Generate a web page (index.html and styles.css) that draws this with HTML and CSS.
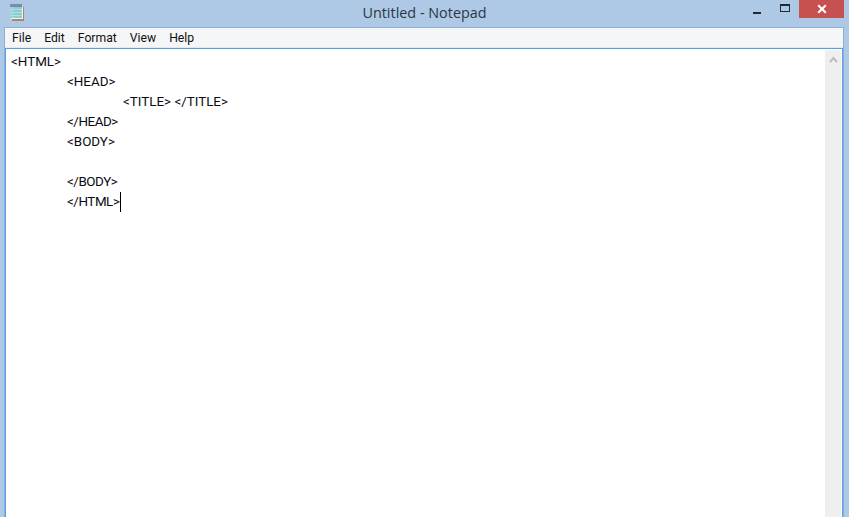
FILE: index.html
```html
<!DOCTYPE html>
<html lang="en">
<head>
<meta charset="utf-8">
<title>Untitled - Notepad</title>
<link rel="stylesheet" href="styles.css">
</head>
<body>
<div class="window">
  <header class="titlebar">
    <svg class="app-icon" width="16" height="17" viewBox="0 0 16 17">
      <path d="M13 3h2v14H3v-2h10z" fill="#a98a5c"/>
      <rect x="13" y="3" width="1" height="12" fill="#f4f4f0"/>
      <rect x="2" y="14" width="12" height="1" fill="#f4f4f0"/>
      <rect x="1" y="2" width="12" height="12" fill="#8ccbd6"/>
      <path d="M1 5.5h12M1 8.5h12M1 11.5h12" stroke="#aee0e4" stroke-width="1"/>
      <rect x="1" y="2" width="4" height="12" fill="#a6dbe0" opacity=".6"/>
      <path d="M2 0v3M4 0v3M6 0v3M8 0v3M10 0v3M12 0v3" stroke="#4a5560" stroke-width="1"/>
    </svg>
    <div class="title">Untitled - Notepad</div>
    <div class="controls">
      <div class="ctl"><span class="min"></span></div>
      <div class="ctl"><span class="max"></span></div>
      <div class="close">
        <svg width="10" height="10" viewBox="0 0 10 10"><path d="M1.2 1.2l7.6 7.6M8.8 1.2l-7.6 7.6" stroke="#fff" stroke-width="2.1"/></svg>
      </div>
    </div>
  </header>
  <div class="client">
    <nav class="menubar">
      <span>File</span><span>Edit</span><span>Format</span><span>View</span><span>Help</span>
    </nav>
    <div class="editor">
      <pre class="text">&lt;HTML&gt;
	&lt;HEAD&gt;
		&lt;TITLE&gt; &lt;/TITLE&gt;
	<span class="tight">&lt;/HEAD&gt;</span>
	&lt;BODY&gt;

	<span class="tight">&lt;/BODY&gt;</span>
	<span class="tight">&lt;/HTML&gt;</span><span class="caret"></span></pre>
      <div class="scrollbar">
        <svg class="arrow" width="9" height="7" viewBox="0 0 9 7"><path d="M1 6l3.5-4L8 6" fill="none" stroke="#bcbcbc" stroke-width="2"/></svg>
      </div>
    </div>
  </div>
</div>
</body>
</html>
```
FILE: styles.css
```css
* { box-sizing: border-box; }
html, body { margin: 0; height: 100%; overflow: hidden; }
body { background: #adc9e6; }
.window {
  width: 849px;
  height: 517px;
  display: flex;
  flex-direction: column;
  background: #adc9e6;
  padding: 0 5px 0 4px;
}
.titlebar {
  height: 27px;
  flex: none;
  display: flex;
  align-items: flex-start;
  position: relative;
}
.app-icon { flex: none; margin: 4px 0 0 5px; }
.title {
  position: absolute;
  left: 0;
  right: 0;
  top: 3px;
  padding-left: 1px;
  text-align: center;
  font: 14.4px/20px "Open Sans", sans-serif;
  color: #2c3644;
}
.controls { margin-left: auto; display: flex; position: relative; }
.ctl { width: 27px; height: 18px; display: flex; align-items: center; justify-content: center; }
.controls .ctl:first-child { align-items: flex-end; padding-bottom: 5px; }
.min { display: block; width: 8px; height: 2px; background: #1f2a36; margin: 0 0 -1px -3px; }
.max { display: block; width: 10px; height: 8px; border: 1px solid #1f2a36; border-top-width: 2px; margin: -3px 0 0 -2px; }
.close {
  width: 45px;
  height: 18px;
  background: #c75050;
  display: flex;
  align-items: center;
  justify-content: center;
}
.client {
  flex: 1;
  min-height: 0;
  display: flex;
  flex-direction: column;
  border-top: 1px solid #8cafd4;
  border-left: 1px solid #8cafd4;
  border-right: 1px solid #8cafd4;
}
.menubar {
  height: 20px;
  flex: none;
  display: flex;
  background: #f5f6f7;
  border-bottom: 1px solid #e8e9ea;
  padding-left: 7px;
  gap: 13px;
  font: 12.2px/20px Roboto, sans-serif;
  color: #111;
}
.editor {
  flex: 1;
  min-height: 0;
  display: flex;
  background: #fff;
  border-top: 1px solid #5a9fe6;
  border-left: 1px solid #5a9fe6;
  border-right: 1px solid #5a9fe6;
  padding-right: 1px;
}
.text {
  flex: 1;
  margin: 0;
  padding: 3px 0 0 5px;
  font: 13.4px/20px Roboto, sans-serif;
  color: #0a0a14;
  tab-size: 56px;
  white-space: pre;
}
.tight { letter-spacing: -0.45px; }
.caret {
  display: inline-block;
  width: 1px;
  height: 20px;
  background: #000;
  vertical-align: top;
  margin-left: 1px;
}
.scrollbar {
  width: 16px;
  flex: none;
  background: #efefef;
  display: flex;
  justify-content: center;
  align-items: flex-start;
  margin-top: 1px;
}
.arrow { margin-top: 6px; }
```
